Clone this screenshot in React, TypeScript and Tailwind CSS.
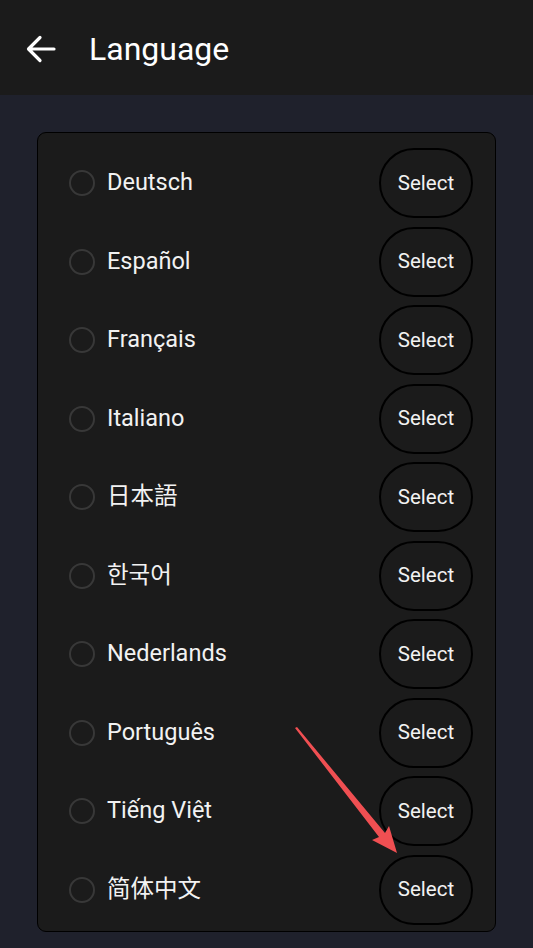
const languages = [
  "Deutsch",
  "Español",
  "Français",
  "Italiano",
  "日本語",
  "한국어",
  "Nederlands",
  "Português",
  "Tiếng Việt",
  "简体中文",
];

const font = {
  fontFamily:
    'Roboto, "Noto Sans", "Noto Sans CJK SC", "Noto Sans CJK KR", sans-serif',
};

function LanguageRow({ name }: { name: string }) {
  return (
    <div className="flex items-center justify-between pl-[31px] pr-[22px]">
      <div className="flex items-center gap-[12px]">
        <span className="h-[26px] w-[26px] rounded-full border-2 border-[#383838]" />
        <span className="text-[23.5px] leading-none text-[#f2f2f2]">{name}</span>
      </div>
      <button className="flex h-[70px] w-[94px] items-center justify-center rounded-full border-2 border-black text-[20.5px] text-[#f2f2f2]">
        Select
      </button>
    </div>
  );
}

export default function App() {
  return (
    <div className="relative min-h-[948px] w-full bg-[#1f212c]" style={font}>
      <header className="flex h-[95px] items-center bg-[#1b1b1b] pl-[25px]">
        <svg width="32" height="32" viewBox="0 0 32 32" fill="none" className="mt-[2px]">
          <path
            d="M29 16H4M15 4.5L3.5 16L15 27.5"
            stroke="white"
            strokeWidth="3.2"
            strokeLinecap="round"
            strokeLinejoin="round"
          />
        </svg>
        <h1 className="ml-[32px] mt-[3px] text-[32px] text-white">Language</h1>
      </header>

      <main className="px-[37px] pt-[37px] pb-[16px]">
        <div className="flex flex-col gap-[8.5px] rounded-[9px] border border-black bg-[#1b1b1b] pt-[15px] pb-[6px]">
          {languages.map((l) => (
            <LanguageRow key={l} name={l} />
          ))}
        </div>
      </main>

      <svg
        className="pointer-events-none absolute left-0 top-0"
        width="533"
        height="948"
      >
        <polygon
          points="295,728 297,727 385,833 389,826 397,853 372,840 379,837"
          fill="#f04f52"
        />
      </svg>
    </div>
  );
}
